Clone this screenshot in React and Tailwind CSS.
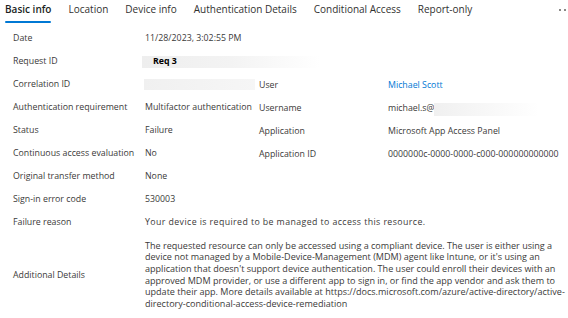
import React from "react";

const tabs = ["Basic info", "Location", "Device info", "Authentication Details", "Conditional Access", "Report-only"];

function Row({ label, value, label2, value2 }) {
  return (
    <div className="grid grid-cols-[132px_114px_129px_1fr] h-[23px] items-center pl-[13px] whitespace-nowrap">
      <div>{label}</div>
      <div>{value}</div>
      <div className="pt-[3px]">{label2}</div>
      <div className="pt-[3px]">{value2}</div>
    </div>
  );
}

export default function App() {
  const para = [
    "The requested resource can only be accessed using a compliant device. The user is either using a",
    "device not managed by a Mobile-Device-Management (MDM) agent like Intune, or it's using an",
    "application that doesn't support device authentication. The user could enroll their devices with an",
    "approved MDM provider, or use a different app to sign in, or find the app vendor and ask them to",
    "update their app. More details available at https://docs.microsoft.com/azure/active-directory/active-",
    "directory-conditional-access-device-remediation",
  ];
  return (
    <div className="w-[568px] h-[318px] overflow-hidden bg-white font-['Open_Sans',sans-serif] text-[8.8px] leading-[11.7px] text-[#3b3a39]">
      <div className="relative flex gap-[17px] pl-[5px] h-[27px] text-[10px] text-[#323130]">
        {tabs.map((t, i) => (
          <div key={t} className={"relative pt-[4px] h-[23px] whitespace-nowrap " + (i === 0 ? "font-semibold text-[#201f1e]" : "")}>
            {t}
            {i === 0 && <div className="absolute left-0 right-0 bottom-0 h-[2px] rounded-full bg-[#0078d4]" />}
          </div>
        ))}
        <div className="absolute right-[2px] top-[9px] flex gap-[3px]">
          <div className="w-[2px] h-[2px] bg-[#8a8886]" />
          <div className="w-[2px] h-[2px] bg-[#8a8886]" />
        </div>
      </div>
      <Row label="Date" value="11/28/2023, 3:02:55 PM" />
      <div className="grid grid-cols-[129px_1fr] h-[23px] items-center pl-[13px] whitespace-nowrap">
        <div>Request ID</div>
        <div className="w-[178px] h-[12px] mt-[1px] bg-gradient-to-r from-[#eeeeee] via-[#f3f3f3] to-white pl-[11px] flex items-center font-bold text-black">Req 3</div>
      </div>
      <Row
        label="Correlation ID"
        value={<div className="w-[111px] h-[11px] -ml-[1px] bg-gradient-to-r from-[#f0f0f0] to-[#f6f6f6]" />}
        label2="User"
        value2={<span className="text-[#0078d4]">Michael Scott</span>}
      />
      <Row label="Authentication requirement" value="Multifactor authentication" label2="Username" value2={
        <div className="flex items-center">michael.s@<div className="w-[105px] h-[13px] bg-gradient-to-r from-[#f0f0f0] to-white" /></div>
      } />
      <Row label="Status" value="Failure" label2="Application" value2="Microsoft App Access Panel" />
      <Row label="Continuous access evaluation" value="No" label2="Application ID" value2="0000000c-0000-0000-c000-000000000000" />
      <Row label="Original transfer method" value="None" />
      <Row label="Sign-in error code" value="530003" />
      <div className="grid grid-cols-[132px_1fr] h-[23px] items-center pl-[13px] whitespace-nowrap">
        <div>Failure reason</div>
        <div className="tracking-[0.4px]">Your device is required to be managed to access this resource.</div>
      </div>
      <div className="grid grid-cols-[132px_1fr] items-center pl-[13px] py-[5.65px] whitespace-nowrap">
        <div className="pt-[2px]">Additional Details</div>
        <div className="text-[9.05px]">
          {para.map((l) => (
            <div key={l}>{l}</div>
          ))}
        </div>
      </div>
    </div>
  );
}
